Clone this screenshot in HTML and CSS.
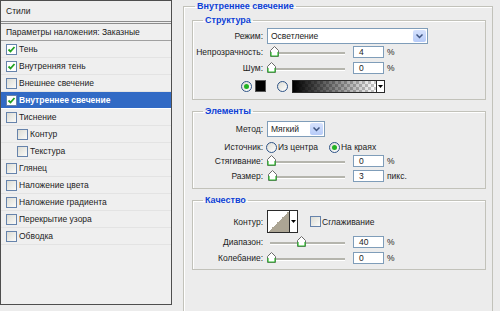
FILE: index.html
```html
<!DOCTYPE html>
<html lang="ru">
<head>
  <meta charset="UTF-8">
  <title>Стиль слоя — Внутреннее свечение</title>
  <link rel="stylesheet" href="styles.css">
</head>
<body>
  <div class="dialog">
    <div class="styles">
      <div class="styles-head">Стили</div>
      <div class="styles-blend">Параметры наложения: Заказные</div>
      <ul class="fx-list">
        <li class="fx"><span class="cb on"><svg width="9" height="9" viewBox="0 0 9 9"><path d="M1.5 4.5L3.5 6.5L7.5 2" fill="none" stroke="#21a121" stroke-width="1.8"/></svg></span>Тень</li>
        <li class="fx"><span class="cb on"><svg width="9" height="9" viewBox="0 0 9 9"><path d="M1.5 4.5L3.5 6.5L7.5 2" fill="none" stroke="#21a121" stroke-width="1.8"/></svg></span>Внутренняя тень</li>
        <li class="fx"><span class="cb"></span>Внешнее свечение</li>
        <li class="fx active"><span class="cb on"><svg width="9" height="9" viewBox="0 0 9 9"><path d="M1.5 4.5L3.5 6.5L7.5 2" fill="none" stroke="#21a121" stroke-width="1.8"/></svg></span>Внутреннее свечение</li>
        <li class="fx"><span class="cb"></span>Тиснение</li>
        <li class="fx sub"><span class="cb"></span>Контур</li>
        <li class="fx sub"><span class="cb"></span>Текстура</li>
        <li class="fx"><span class="cb"></span>Глянец</li>
        <li class="fx"><span class="cb"></span>Наложение цвета</li>
        <li class="fx"><span class="cb"></span>Наложение градиента</li>
        <li class="fx"><span class="cb"></span>Перекрытие узора</li>
        <li class="fx"><span class="cb"></span>Обводка</li>
      </ul>
    </div>

    <fieldset class="panel">
      <legend>Внутреннее свечение</legend>

      <!-- Структура -->
      <fieldset class="group group-structure">
        <legend>Структура</legend>
        <div class="row row-mode">
          <span class="lbl">Режим:</span>
          <div class="select select-wide">
            <span class="select-text">Осветление</span>
            <span class="select-btn"><svg width="7" height="5" viewBox="0 0 7 5"><path d="M0.5 0.5L3.5 3.5L6.5 0.5" fill="none" stroke="#3f5580" stroke-width="1.5"/></svg></span>
          </div>
        </div>
        <div class="row">
          <span class="lbl">Непрозрачность:</span>
          <div class="slider"><span class="thumb" style="left: 3px"><svg width="9" height="11" viewBox="0 0 9 11"><path d="M0.5 10.5V4.5L4.5 0.5L8.5 4.5V10.5Z" fill="#fff" stroke="#6a6a6a"/><path d="M1 10H8M1 10V6M8 10V6" stroke="#2eb82e" stroke-width="1.2"/></svg></span></div>
          <span class="num">4</span><span class="unit">%</span>
        </div>
        <div class="row">
          <span class="lbl">Шум:</span>
          <div class="slider"><span class="thumb" style="left: 0px"><svg width="9" height="11" viewBox="0 0 9 11"><path d="M0.5 10.5V4.5L4.5 0.5L8.5 4.5V10.5Z" fill="#fff" stroke="#6a6a6a"/><path d="M1 10H8M1 10V6M8 10V6" stroke="#2eb82e" stroke-width="1.2"/></svg></span></div>
          <span class="num">0</span><span class="unit">%</span>
        </div>
        <div class="row row-colors">
          <span class="radio on"></span>
          <span class="swatch"></span>
          <span class="radio"></span>
          <div class="gradient">
            <span class="gradient-fill"></span>
            <span class="mini-btn"><svg width="5" height="3" viewBox="0 0 5 3"><path d="M0 0H5L2.5 3Z"/></svg></span>
          </div>
        </div>
      </fieldset>

      <!-- Элементы -->
      <fieldset class="group group-elements">
        <legend>Элементы</legend>
        <div class="row row-mode">
          <span class="lbl">Метод:</span>
          <div class="select select-short">
            <span class="select-text">Мягкий</span>
            <span class="select-btn"><svg width="7" height="5" viewBox="0 0 7 5"><path d="M0.5 0.5L3.5 3.5L6.5 0.5" fill="none" stroke="#3f5580" stroke-width="1.5"/></svg></span>
          </div>
        </div>
        <div class="row row-sm row-source">
          <span class="lbl">Источник:</span>
          <span class="radio"></span><span class="opt">Из центра</span>
          <span class="radio on"></span><span class="opt">На краях</span>
        </div>
        <div class="row row-sm">
          <span class="lbl">Стягивание:</span>
          <div class="slider"><span class="thumb" style="left: 0px"><svg width="9" height="11" viewBox="0 0 9 11"><path d="M0.5 10.5V4.5L4.5 0.5L8.5 4.5V10.5Z" fill="#fff" stroke="#6a6a6a"/><path d="M1 10H8M1 10V6M8 10V6" stroke="#2eb82e" stroke-width="1.2"/></svg></span></div>
          <span class="num">0</span><span class="unit">%</span>
        </div>
        <div class="row row-sm row-size">
          <span class="lbl">Размер:</span>
          <div class="slider"><span class="thumb" style="left: 1px"><svg width="9" height="11" viewBox="0 0 9 11"><path d="M0.5 10.5V4.5L4.5 0.5L8.5 4.5V10.5Z" fill="#fff" stroke="#6a6a6a"/><path d="M1 10H8M1 10V6M8 10V6" stroke="#2eb82e" stroke-width="1.2"/></svg></span></div>
          <span class="num">3</span><span class="unit">пикс.</span>
        </div>
      </fieldset>

      <!-- Качество -->
      <fieldset class="group group-quality">
        <legend>Качество</legend>
        <div class="row row-contour">
          <span class="lbl">Контур:</span>
          <div class="contour">
            <span class="contour-fill"></span>
            <span class="mini-btn"><svg width="5" height="3" viewBox="0 0 5 3"><path d="M0 0H5L2.5 3Z"/></svg></span>
          </div>
          <span class="cb"></span><span class="opt">Сглаживание</span>
        </div>
        <div class="row row-sm">
          <span class="lbl">Диапазон:</span>
          <div class="slider"><span class="thumb" style="left: 30px"><svg width="9" height="11" viewBox="0 0 9 11"><path d="M0.5 10.5V4.5L4.5 0.5L8.5 4.5V10.5Z" fill="#fff" stroke="#6a6a6a"/><path d="M1 10H8M1 10V6M8 10V6" stroke="#2eb82e" stroke-width="1.2"/></svg></span></div>
          <span class="num">40</span><span class="unit">%</span>
        </div>
        <div class="row row-sm">
          <span class="lbl">Колебание:</span>
          <div class="slider"><span class="thumb" style="left: 0px"><svg width="9" height="11" viewBox="0 0 9 11"><path d="M0.5 10.5V4.5L4.5 0.5L8.5 4.5V10.5Z" fill="#fff" stroke="#6a6a6a"/><path d="M1 10H8M1 10V6M8 10V6" stroke="#2eb82e" stroke-width="1.2"/></svg></span></div>
          <span class="num">0</span><span class="unit">%</span>
        </div>
      </fieldset>
    </fieldset>
  </div>
</body>
</html>
```

FILE: styles.css
```css
* {
  box-sizing: border-box;
}
body {
  margin: 0;
  width: 500px;
  height: 311px;
  overflow: hidden;
  background: #ececec;
  font-family: "Liberation Sans", Arial, sans-serif;
  font-size: 8.5px;
  color: #1c1c1c;
}
.dialog {
  display: flex;
  align-items: flex-start;
  gap: 11px;
}

/* список стилей слева */
.styles {
  flex: none;
  width: 172px;
  height: 305px;
  border: 1px solid #4e4e4e;
  background: #efefef;
}
.styles-head {
  height: 23px;
  line-height: 20px;
  padding-left: 5px;
  border-bottom: 3px double #8c8c8c;
}
.styles-blend {
  height: 17px;
  line-height: 16px;
  padding-left: 5px;
  border-bottom: 1px solid #a0a0a0;
}
.fx-list {
  list-style: none;
  margin: 0;
  padding: 0;
}
.fx {
  height: 17px;
  display: flex;
  align-items: center;
  gap: 2px;
  padding-left: 5px;
  border-bottom: 1px solid #e3e3e3;
}
.fx.sub {
  padding-left: 16px;
}
.fx.active {
  background: #316ac5;
  color: #fff;
  font-weight: bold;
  border-bottom-color: #fff;
}

.cb {
  flex: none;
  width: 11px;
  height: 11px;
  border: 1px solid #6683ab;
  background: linear-gradient(135deg, #dcdcd4, #fbfbf9);
  display: flex;
  align-items: center;
  justify-content: center;
}
.cb.on {
  background: #fff;
}

/* правая часть */
.panel {
  flex: none;
  margin: 0;
  padding: 0 6px 0 8px;
  width: 310px;
  height: 311px;
  min-width: 0;
  border: 1px solid #c2c2ba;
  border-bottom: none;
  box-shadow: inset 1px 1px 0 #fff;
}
.panel > legend,
.group > legend {
  padding: 0 2px;
  line-height: 12px;
  font-size: 9px;
  color: #0d3fd6;
  font-weight: bold;
}
.panel > legend {
  margin-left: 3px;
}
.group {
  margin: 2px 0 0;
  padding: 0 0 5px;
  min-width: 0;
  width: 294px;
  border: 1px solid #c2c2ba;
  box-shadow: inset 1px 1px 0 #fff;
}
.group > legend {
  margin-left: 10px;
}
.group-elements,
.group-quality {
  margin-top: 5px;
}
.group-quality {
  padding-bottom: 4px;
}

.row {
  display: flex;
  align-items: center;
  height: 16px;
}
.row-sm {
  height: 14px;
}
.lbl {
  flex: none;
  width: 70px;
  margin-right: 4px;
  text-align: right;
}
.row-mode {
  margin-top: 2px;
}
.group-elements .row-mode {
  margin-top: 4px;
}
.row-source {
  margin-top: 3px;
}
.row-size {
  margin-top: 1px;
}
.group-quality .row-sm {
  margin-top: 2px;
}

.select {
  display: flex;
  height: 16px;
  background: #fff;
  border: 1px solid #7f9db9;
}
.select-wide {
  width: 161px;
}
.select-short {
  width: 58px;
}
.select-text {
  flex: 1;
  padding-left: 3px;
  line-height: 14px;
}
.select-btn {
  flex: none;
  width: 13px;
  margin: 1px;
  border-radius: 2px;
  background: linear-gradient(#d6e2fd, #b7cbf8);
  display: flex;
  align-items: center;
  justify-content: center;
}

.slider {
  flex: none;
  position: relative;
  width: 80px;
  height: 12px;
}
.slider::before {
  content: "";
  position: absolute;
  left: 3px;
  right: 2px;
  top: 6px;
  height: 2px;
  background: #b5b5ad;
  border-bottom: 1px solid #fff;
}
.thumb {
  position: absolute;
  top: 0;
  display: flex;
}
.num {
  flex: none;
  width: 31px;
  height: 12px;
  margin-left: 6px;
  padding-left: 5px;
  line-height: 10px;
  background: #fff;
  border: 1px solid #7f9db9;
}
.unit {
  margin-left: 3px;
}

.row-colors {
  margin-top: 2px;
  padding-left: 48px;
}
.radio {
  flex: none;
  width: 11px;
  height: 11px;
  border-radius: 50%;
  border: 1px solid #2f5487;
  background: linear-gradient(135deg, #dcdcd4, #fff);
  display: flex;
  align-items: center;
  justify-content: center;
}
.radio.on::after {
  content: "";
  width: 5px;
  height: 5px;
  border-radius: 50%;
  background: #22b322;
}
.swatch {
  flex: none;
  width: 11px;
  height: 12px;
  margin: 0 11px 0 3px;
  background: #000;
  border: 1px solid #555;
}
.gradient {
  flex: none;
  display: flex;
  width: 93px;
  height: 13px;
  margin-left: 4px;
  border: 1px solid #2a2a2a;
}
.gradient-fill {
  flex: 1;
  background:
    linear-gradient(to right, #000, rgba(0, 0, 0, 0)),
    repeating-conic-gradient(#c8c8c8 0 25%, #fff 0 50%) 0 0 / 6px 6px;
}
.mini-btn {
  flex: none;
  width: 8px;
  background: #fff;
  border-left: 1px solid #2a2a2a;
  display: flex;
  align-items: center;
  justify-content: center;
}

.row-source .radio {
  margin-left: -1px;
}
.opt {
  margin-left: 1px;
}
.row-source .opt:nth-of-type(3) {
  margin-right: 12px;
}

.row-contour {
  height: 23px;
  margin-top: 4px;
}
.contour {
  flex: none;
  display: flex;
  width: 31px;
  height: 23px;
  border: 1px solid #2a2a2a;
}
.contour-fill {
  flex: 1;
  background: linear-gradient(to bottom right, #fff 50%, #aca594 50%);
}
.row-contour .cb {
  margin-left: 12px;
}
```
